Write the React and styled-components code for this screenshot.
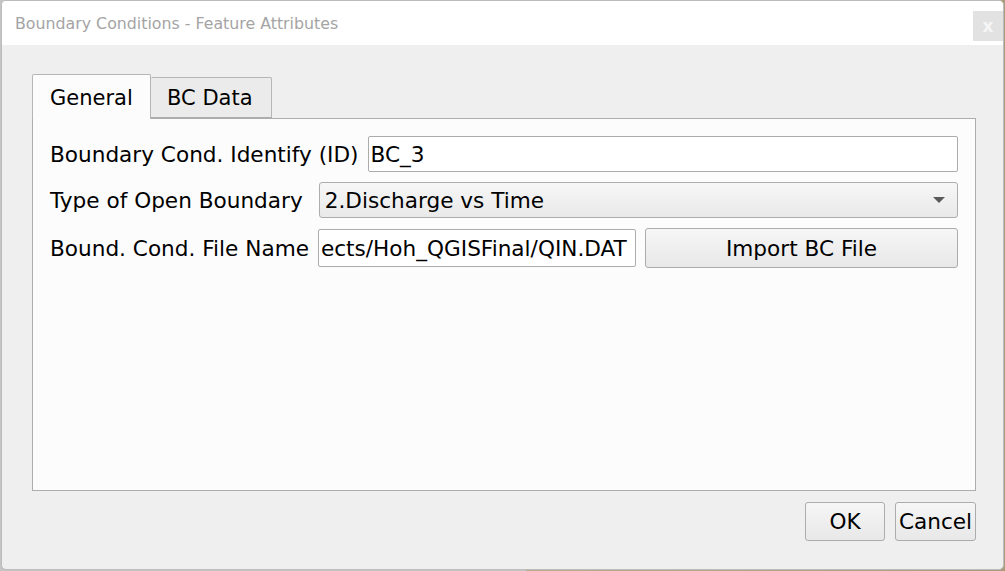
import React from 'react';
import styled, { createGlobalStyle } from 'styled-components';

const GlobalStyle = createGlobalStyle`
  html, body {
    margin: 0;
    padding: 0;
    width: 1005px;
    height: 571px;
    overflow: hidden;
    background: linear-gradient(90deg, #c4c4c4 0, #c4c4c4 526px, #b9ab8c 526px, #a99c7c 100%);
  }
  * { box-sizing: border-box; }
`;

const Window = styled.div`
  margin-left: 1px;
  width: 1003px;
  height: 570px;
  border: 1px solid #bcbcbc;
  border-radius: 5px;
  background: #efefef;
  overflow: hidden;
  display: flex;
  flex-direction: column;
  font-family: 'DejaVu Sans', Verdana, sans-serif;
  color: #000;
`;

const TitleBar = styled.div`
  height: 44px;
  background: #fff;
  display: flex;
  align-items: flex-start;
  justify-content: space-between;
  padding-left: 13px;
`;

const Title = styled.div`
  font-size: 15.8px;
  color: #a4a4a4;
  padding-top: 13px;
`;

const CloseBox = styled.div`
  width: 30px;
  height: 30px;
  margin-top: 10px;
  background: #e2e2e2;
  color: #f6f6f6;
  font-weight: bold;
  font-size: 17px;
  display: flex;
  align-items: center;
  justify-content: center;
`;

const Body = styled.div`
  flex: 1;
  display: flex;
  flex-direction: column;
  padding: 28px 27px 0 30px;
`;

const TabBar = styled.div`
  display: flex;
  align-items: flex-end;
  height: 45px;
  position: relative;
  z-index: 1;
`;

const Tab = styled.div`
  height: ${p => (p.$active ? '45px' : '41px')};
  width: ${p => p.$w}px;
  margin-bottom: ${p => (p.$active ? '-1px' : '0')};
  background: ${p => (p.$active ? '#fcfcfc' : '#ebebeb')};
  border: 1px solid #b6b6b6;
  border-bottom: ${p => (p.$active ? 'none' : '1px solid #adadad')};
  border-left: ${p => (p.$active ? '1px solid #b6b6b6' : 'none')};
  border-radius: 2px 2px 0 0;
  font-size: 21px;
  display: flex;
  align-items: center;
  padding-left: ${p => (p.$active ? '17px' : '16px')};
  padding-top: ${p => (p.$active ? '1px' : '0')};
`;

const Panel = styled.div`
  height: 373px;
  background: #fcfcfc;
  border: 1px solid #adadad;
  padding: 17px 17px;
  display: flex;
  flex-direction: column;
  gap: 10px;
`;

const Row = styled.div`
  display: flex;
  align-items: center;
  gap: ${p => p.$gap || 9}px;
`;

const Label = styled.div`
  font-size: 21.6px;
  white-space: nowrap;
  flex: none;
`;

const TextBox = styled.div`
  flex: 1;
  min-width: 0;
  height: ${p => p.$h || 36}px;
  background: #fff;
  border: 1px solid #acacac;
  border-radius: 2px;
  font-size: 21.6px;
  display: flex;
  align-items: center;
  padding: 0 3px 0 2px;
  overflow: hidden;
  white-space: nowrap;
`;

const Combo = styled.div`
  flex: 1;
  height: 36px;
  border: 1px solid #adadad;
  border-radius: 3px;
  background: linear-gradient(#f7f7f7, #e9e9e9);
  font-size: 21.6px;
  display: flex;
  align-items: center;
  justify-content: space-between;
  padding: 0 12px 0 5px;
`;

const Arrow = styled.div`
  width: 0;
  height: 0;
  border-left: 6px solid transparent;
  border-right: 6px solid transparent;
  border-top: 6px solid #5a5a5a;
`;

const Button = styled.div`
  flex: ${p => (p.$grow ? 1 : 'none')};
  width: ${p => (p.$w ? `${p.$w}px` : 'auto')};
  height: ${p => p.$h || 40}px;
  border: 1px solid #acacac;
  border-radius: 3px;
  background: linear-gradient(#f6f6f6, #e8e8e8);
  font-size: 21.6px;
  display: flex;
  align-items: center;
  justify-content: center;
  white-space: nowrap;
`;

const Footer = styled.div`
  display: flex;
  justify-content: flex-end;
  gap: 10px;
  padding-top: 11px;
`;

export default function App() {
  return (
    <>
      <GlobalStyle />
      <Window>
        <TitleBar>
          <Title>Boundary Conditions - Feature Attributes</Title>
          <CloseBox>x</CloseBox>
        </TitleBar>
        <Body>
          <TabBar>
            <Tab $active $w={119}>General</Tab>
            <Tab $w={121}>BC Data</Tab>
          </TabBar>
          <Panel>
            <Row>
              <Label>Boundary Cond. Identify (ID)</Label>
              <TextBox>BC_3</TextBox>
            </Row>
            <Row $gap={16}>
              <Label>Type of Open Boundary</Label>
              <Combo>
                <span>2.Discharge vs Time</span>
                <Arrow />
              </Combo>
            </Row>
            <Row $gap={9}>
              <Label>Bound. Cond. File Name</Label>
              <TextBox $h={38}>ects/Hoh_QGISFinal/QIN.DAT</TextBox>
              <Button $grow>Import BC File</Button>
            </Row>
          </Panel>
          <Footer>
            <Button $w={80} $h={39}>OK</Button>
            <Button $w={81} $h={39}>Cancel</Button>
          </Footer>
        </Body>
      </Window>
    </>
  );
}
